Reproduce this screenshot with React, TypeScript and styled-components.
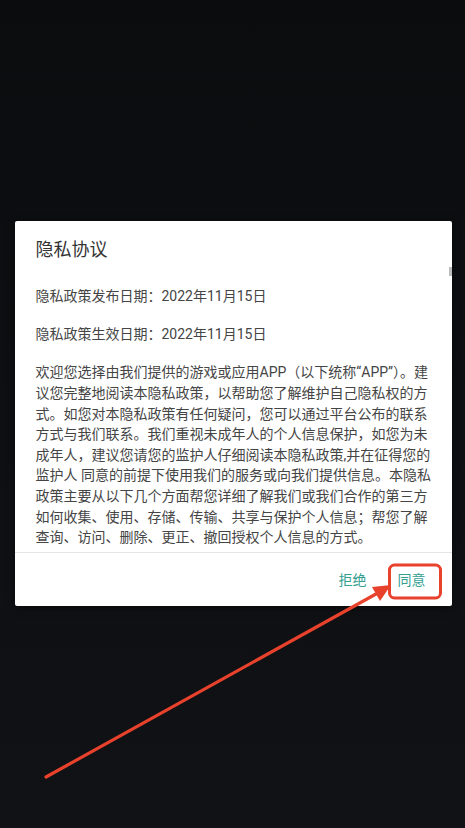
import styled, { createGlobalStyle } from "styled-components";

const GlobalStyle = createGlobalStyle`
  html, body {
    margin: 0;
    padding: 0;
  }
  body {
    background: linear-gradient(180deg, #0b0c0e 0%, #101215 100%);
    font-family: Roboto, "Noto Sans CJK SC", sans-serif;
  }
`;

const PARAGRAPHS = [
  "隐私政策发布日期：2022年11月15日",
  "隐私政策生效日期：2022年11月15日",
  "欢迎您选择由我们提供的游戏或应用APP（以下统称“APP”）。建议您完整地阅读本隐私政策，以帮助您了解维护自己隐私权的方式。如您对本隐私政策有任何疑问，您可以通过平台公布的联系方式与我们联系。我们重视未成年人的个人信息保护，如您为未成年人，建议您请您的监护人仔细阅读本隐私政策,并在征得您的监护人 同意的前提下使用我们的服务或向我们提供信息。本隐私政策主要从以下几个方面帮您详细了解我们或我们合作的第三方如何收集、使用、存储、传输、共享与保护个人信息；帮您了解查询、访问、删除、更正、撤回授权个人信息的方式。",
];

export default function App() {
  return (
    <>
      <GlobalStyle />
      <Screen>
        <Dialog>
          <Title>隐私协议</Title>
          <Content>
            {PARAGRAPHS.map((p, i) => (
              <Paragraph key={i}>{p}</Paragraph>
            ))}
            <ScrollThumb />
          </Content>
          <Footer>
            <ActionButton>拒绝</ActionButton>
            <ActionButton>同意</ActionButton>
          </Footer>
        </Dialog>
        <Annotation viewBox="0 0 465 828" width="465" height="828">
          <rect x="389.5" y="565" width="51" height="33" rx="5" ry="5" fill="none" stroke="#e8412c" strokeWidth="3" />
          <line x1="46" y1="777" x2="376" y2="594" stroke="#e8412c" strokeWidth="3.2" strokeLinecap="round" />
          <polygon points="391,585 372,587 380,601" fill="#e8412c" />
        </Annotation>
      </Screen>
    </>
  );
}

const Screen = styled.div`
  position: relative;
  width: 465px;
  height: 828px;
  display: flex;
  align-items: center;
  justify-content: center;
  overflow: hidden;
`;

const Dialog = styled.div`
  width: 437px;
  margin-left: 1px;
  margin-top: -1px;
  background: #ffffff;
  border-radius: 2px;
  display: flex;
  flex-direction: column;
  box-shadow: 0 2px 8px rgba(0, 0, 0, 0.4);
`;

const Title = styled.div`
  padding: 16px 21px 5px;
  font-size: 18px;
  line-height: 25px;
  color: #333333;
`;

const Content = styled.div`
  position: relative;
  height: 286px;
  overflow: hidden;
  padding: 19px 20px 0 21px;
  box-sizing: border-box;
  border-bottom: 1px solid #e4e4e4;
`;

const Paragraph = styled.p`
  margin: 0 0 17.6px;
  font-size: 14px;
  line-height: 20.6px;
  color: #454545;
`;

const ScrollThumb = styled.div`
  position: absolute;
  top: 0;
  right: 0;
  width: 3px;
  height: 9px;
  background: #bdbdbd;
`;

const Footer = styled.div`
  height: 53px;
  display: flex;
  align-items: center;
  justify-content: flex-end;
  gap: 31px;
  padding: 0 26px 0 0;
`;

const ActionButton = styled.button`
  border: none;
  background: none;
  padding: 0;
  font-family: inherit;
  font-size: 14px;
  line-height: 20px;
  color: #35a092;
  cursor: pointer;
`;

const Annotation = styled.svg`
  position: absolute;
  left: 0;
  top: 0;
  pointer-events: none;
`;
